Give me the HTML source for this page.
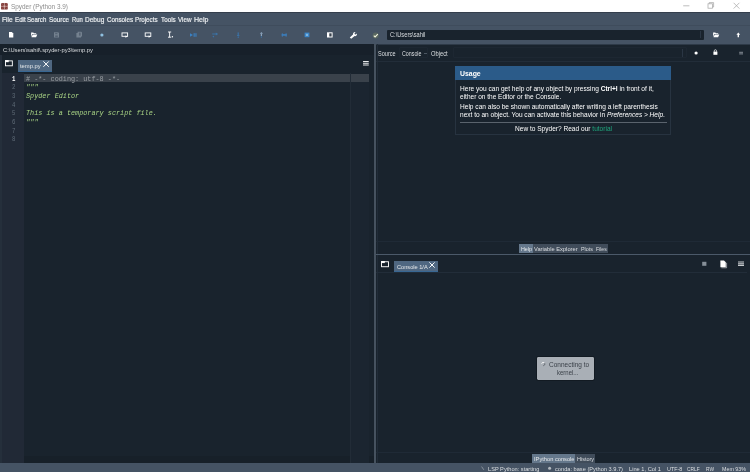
<!DOCTYPE html>
<html><head><meta charset="utf-8"><title>Spyder (Python 3.9)</title>
<style>
*{box-sizing:border-box;margin:0;padding:0}
html,body{width:750px;height:472px;overflow:hidden;background:#19232D}
body{position:relative;font-family:"Liberation Sans",sans-serif;color:#E0E1E3}
.a{position:absolute}
.t{position:absolute;white-space:nowrap;transform-origin:0 50%;display:block}
svg{position:absolute;overflow:visible}
.t,svg{filter:blur(0.35px)}

</style></head><body>
<!-- title bar -->
<div class="a" style="left:0;top:0;width:750px;height:12px;background:#fff"></div>
<svg style="left:1.3px;top:2.6px" width="6.8" height="6.6" viewBox="0 0 68 66"><rect x="0" y="0" width="68" height="66" rx="12" fill="#7c3531"/><path d="M34 0V66M0 33H68" stroke="#f3dcda" stroke-width="7" fill="none" opacity=".8"/><path d="M10 10L58 56M58 10L10 56" stroke="#f3dcda" stroke-width="4" fill="none" opacity=".45"/><rect x="3" y="3" width="62" height="60" rx="10" fill="none" stroke="#c99" stroke-width="4" opacity=".5"/></svg>
<svg style="left:680px;top:1px" width="64" height="10" viewBox="680 1 64 10"><g stroke="#a8a8a8" stroke-width=".75" fill="none"><path d="M683.2 5.8H689.4"/><rect x="708" y="3.8" width="4.4" height="4.4"/><path d="M709.2 3.8V2.6H713.6V7H712.4"/><path d="M733.6 2.8L739.4 8.6M739.4 2.8L733.6 8.6"/></g></svg>
<!-- menu + toolbar -->
<div class="a" style="left:0;top:12px;width:750px;height:32.6px;background:#455364"></div>
<div class="a" style="left:0;top:24.6px;width:750px;height:1px;background:#3f4c5c"></div>
<div class="a" style="left:0;top:44.2px;width:750px;height:.8px;background:#2e3a48"></div>
<div class="a" style="left:0;top:12px;width:750px;height:.7px;background:#353f4d"></div>
<!-- toolbar icons -->
<svg style="left:0;top:24px" width="750" height="20" viewBox="0 24 750 20">
 <g fill="#fff">
  <path d="M9 32.1h2.8l1.5 1.5v3.9H9z"/>
  <path d="M31.1 32.6h2.2l.6.7h2.3v.8h-3.9l-1.2 3zM32.7 34.6h4.6l-1.2 2.6h-4.6z"/>
 </g>
 <g fill="#74818f">
  <path d="M54 32.2h4.2l.8.8v4.4H54z"/><rect x="55.2" y="32.9" width="2.2" height="1.3" fill="#556373"/><rect x="55.2" y="35.4" width="2.6" height="1.6" fill="#556373"/>
  <path d="M77.6 31.8h3.6l.8.8v3.8h-1v1.2h-4.6v-4.6h1.2z"/><rect x="79" y="32.6" width="1.6" height="3" fill="#556373"/>
 </g>
 <circle cx="101.9" cy="35" r="1.6" fill="#8fc0e0"/>
 <g fill="none" stroke="#fff" stroke-width=".9">
  <rect x="122" y="32.9" width="5.6" height="3.4"/>
  <rect x="145.2" y="32.9" width="5.6" height="3.4"/>
 </g>
 <path d="M125.4 35.6l2.4.9-2.4 1.2zM148.6 35.6l2.4.9-2.4 1.2z" fill="#fff"/>
 <path d="M168 32h3.2M169.6 32v5.2M168 37.2h3.2" stroke="#fff" stroke-width=".9" fill="none"/>
 <circle cx="172.4" cy="36.8" r=".7" fill="#fff"/>
 <g fill="#3b82c4">
  <path d="M190 33.2l3 1.8-3 1.8z"/><rect x="193.6" y="33.2" width="1.1" height="3.6"/><rect x="195.4" y="33.2" width="1.1" height="3.6"/>
 </g>
 <g fill="#3a78b2" opacity=".85">
  <path d="M212.2 33.4h4.4v1.1h-4.4zM215.8 32.6l2.4 1.5-2.4 1.5z"/><circle cx="213.4" cy="36.6" r=".8"/>
  <rect x="237.6" y="32.4" width="1.2" height="3.2"/><path d="M236.6 35l1.6 1.8 1.6-1.8z"/><circle cx="238.2" cy="37.4" r=".6"/>
  <circle cx="261.4" cy="37" r=".7"/>
 </g>
 <g fill="#8da5bd"><rect x="260.8" y="33.4" width="1.2" height="2.6"/><path d="M259.8 33.8l1.6-1.8 1.6 1.8z"/></g>
 <g fill="#3b82c4"><rect x="281.6" y="34.2" width="5.2" height="1.5"/><rect x="281.8" y="33" width="1" height="4" opacity=".6"/><rect x="285.6" y="33" width="1" height="4" opacity=".6"/></g>
 <rect x="304.6" y="32.6" width="4.8" height="4.6" fill="#3b86c8"/><rect x="305.9" y="33.8" width="2.2" height="2.2" fill="#7fb4de"/>
 <rect x="327" y="32.3" width="5.6" height="5.2" fill="#fff"/><rect x="329.3" y="33.3" width="2.3" height="3.2" fill="#39434f"/>
 <path d="M349.8 37.6l3.2-3.2a2 2 0 0 1 2.6-2.2l-1.1 1.1.3 1 1 .3 1.1-1.1a2 2 0 0 1-2.3 2.6l-3.4 2.6z" fill="#fff"/>
 <circle cx="375.6" cy="35.4" r="3" fill="#6d7c5c" opacity=".5"/><path d="M373.8 35.6l1.3 1.3 2.7-2.7" stroke="#f4f6e0" stroke-width="1.1" fill="none"/>
 <g fill="#fff">
  <path d="M713.1 32.6h2.2l.6.7h2.3v.8h-3.9l-1.2 3zM714.7 34.6h4.6l-1.2 2.6h-4.6z"/>
  <path d="M738.3 32.6l1.9 2.2h-1.2v2.4h-1.4v-2.4h-1.2z"/>
 </g>
</svg>
<!-- cwd combobox -->
<div class="a" style="left:387px;top:29.6px;width:317.4px;height:10.2px;background:#19232D;border-radius:1px"></div>
<div class="a" style="left:700.2px;top:31px;width:1px;height:7.4px;background:#2a3644"></div>
<!-- panes background -->
<div class="a" style="left:0;top:44.4px;width:374px;height:10.4px;background:#17202a"></div>
<!-- line number area -->
<div class="a" style="left:0;top:73px;width:24.4px;height:390px;background:#212936"></div>
<div class="a" style="left:0;top:55px;width:1.6px;height:408px;background:#252f3b"></div>
<div class="a" style="left:24.4px;top:456.4px;width:349.6px;height:6.8px;background:#172029"></div>
<!-- current line -->
<div class="a" style="left:24.4px;top:73.8px;width:344.6px;height:8.2px;background:#3a424b"></div>
<!-- edge line -->
<div class="a" style="left:349.5px;top:73px;width:1px;height:390px;background:#222c37"></div>
<div class="a" style="left:350.5px;top:82px;width:18.5px;height:381px;background:#1b2530"></div>
<!-- editor tab bar -->
<svg style="left:5px;top:60px" width="7.8" height="6.4" viewBox="0 0 84 66"><rect x="5" y="8" width="74" height="53" fill="none" stroke="#fff" stroke-width="10"/><path d="M0 0h40v22H0z" fill="#fff"/></svg>
<div class="a" style="left:17.8px;top:60.4px;width:34.2px;height:11.8px;background:#4f6781;border-bottom:1.6px solid #386793"></div>
<svg style="left:43.4px;top:61.4px" width="6.2" height="6.2" viewBox="0 0 62 62"><path d="M4 4L58 58M58 4L4 58" stroke="#fff" stroke-width="10" fill="none"/></svg>
<svg style="left:362.8px;top:60.9px" width="5.8" height="4.6" viewBox="0 0 62 50"><path d="M0 6H62M0 25H62M0 44H62" stroke="#e8eaec" stroke-width="11" fill="none"/></svg>
<!-- vertical splitter -->
<div class="a" style="left:374.3px;top:44.4px;width:1.8px;height:419px;background:#46525f"></div>
<!-- help pane toolbar -->
<div class="a" style="left:376.6px;top:44.4px;width:.8px;height:419px;background:#212c38"></div>
<div class="a" style="left:376px;top:61px;width:374px;height:1px;background:#222d39"></div>
<div class="a" style="left:398.6px;top:47.4px;width:29.6px;height:10.6px;border:1px solid #1d2732;border-radius:1px"></div>
<div class="a" style="left:424px;top:53px;width:2.6px;height:1px;background:#4b5662"></div>
<div class="a" style="left:452.6px;top:47.4px;width:234px;height:10.6px;border:1px solid #1d2732;border-radius:1px"></div>
<div class="a" style="left:682px;top:48.6px;width:1px;height:8px;background:#2a3644"></div>
<svg style="left:690px;top:46px" width="58" height="12" viewBox="690 46 58 12">
 <circle cx="696.1" cy="53" r="1.6" fill="#fff"/>
 <rect x="713.4" y="51.6" width="4" height="3.2" fill="#fff"/><path d="M714.3 51.8v-1a1.1 1.1 0 0 1 2.2 0v1" stroke="#fff" stroke-width=".7" fill="none"/>
 <path d="M739.2 52.3h3.8M739.2 53.9h3.8" stroke="#8e979f" stroke-width=".9"/>
</svg>
<!-- usage box -->
<div class="a" style="left:455.2px;top:66px;width:216px;height:69px;border:1px solid #273340;background:#19232D"></div>
<div class="a" style="left:455.2px;top:66px;width:216px;height:14px;background:#2b5b89"></div>
<div class="a" style="left:459.8px;top:121.5px;width:207px;height:1px;background:#5a636d"></div>
<!-- help bottom tabs -->
<div class="a" style="left:376px;top:241px;width:374px;height:1px;background:#1f2a36"></div>
<div class="a" style="left:519.2px;top:244.2px;width:88.4px;height:8.4px;background:#404c5a"></div>
<div class="a" style="left:519.2px;top:244.2px;width:13.6px;height:8.4px;background:#64778b"></div>
<!-- horizontal splitter -->
<div class="a" style="left:376px;top:254px;width:374px;height:1.4px;background:#4b5969"></div>
<!-- console pane -->
<svg style="left:381.2px;top:261px" width="8" height="6.2" viewBox="0 0 84 66"><rect x="5" y="8" width="74" height="53" fill="none" stroke="#fff" stroke-width="10"/><path d="M0 0h40v22H0z" fill="#fff"/></svg>
<div class="a" style="left:394px;top:261px;width:44.2px;height:11.4px;background:#4f6781;border-bottom:1.6px solid #386793"></div>
<svg style="left:429.4px;top:262px" width="6" height="6" viewBox="0 0 62 62"><path d="M4 4L58 58M58 4L4 58" stroke="#fff" stroke-width="10" fill="none"/></svg>
<div class="a" style="left:376px;top:272px;width:371px;height:1px;background:#222d39"></div>
<svg style="left:700px;top:258px" width="48" height="12" viewBox="700 258 48 12">
 <rect x="702.2" y="261.8" width="4.2" height="4" fill="#868f98"/>
 <path d="M720.4 260.4h3.6l1.8 1.8v5h-5.4z" fill="#fff"/><path d="M721.4 267.8h5.2v-5" stroke="#c9ccd0" stroke-width=".7" fill="none"/>
 <path d="M738 262h6M738 263.7h6M738 265.4h6" stroke="#c6cacd" stroke-width="1.1"/>
</svg>
<!-- connecting box -->
<div class="a" style="left:537.2px;top:357.4px;width:56.6px;height:22.8px;background:#a9afb6;border-radius:1.4px;box-shadow:0 0 0 .9px #121a22"></div>
<svg style="left:541px;top:362.2px" width="4.2" height="4.2" viewBox="0 0 42 42"><path d="M6 16A17 17 0 0 1 36 12" stroke="#fff" stroke-width="9" fill="none"/><path d="M36 12A17 17 0 0 1 24 37" stroke="#4a5058" stroke-width="8" fill="none"/></svg>
<!-- console bottom tabs -->
<div class="a" style="left:376px;top:452.4px;width:374px;height:1px;background:#1f2a36"></div>
<div class="a" style="left:532px;top:454.2px;width:63.4px;height:8.6px;background:#404c5a"></div>
<div class="a" style="left:532px;top:454.2px;width:43.4px;height:8.6px;background:#64778b"></div>
<!-- status bar -->
<div class="a" style="left:0;top:463.2px;width:750px;height:9px;background:#455364"></div>
<svg style="left:480px;top:464px" width="80" height="8" viewBox="480 464 80 8">
 <path d="M481.6 466.6l2.2 3.2" stroke="#8f99a3" stroke-width=".9" fill="none"/>
 <circle cx="549.6" cy="468.2" r="1.5" fill="#b4bac0"/>
</svg>

<span class="t" id="t0" style='left:11.00px;top:1.60px;font-size:7.8px;line-height:10px;color:#8c8c8c;font-family:"Liberation Sans",sans-serif;transform:scaleX(0.8220);'>Spyder (Python 3.9)</span>
<span class="t" id="t1" style='left:2.00px;top:15.20px;font-size:8.0px;line-height:10px;color:#eef0f2;font-family:"Liberation Sans",sans-serif;-webkit-text-stroke:.2px #eef0f2;transform:scaleX(0.8301);'>File</span>
<span class="t" id="t2" style='left:14.70px;top:15.20px;font-size:8.0px;line-height:10px;color:#eef0f2;font-family:"Liberation Sans",sans-serif;-webkit-text-stroke:.2px #eef0f2;transform:scaleX(0.7755);'>Edit</span>
<span class="t" id="t3" style='left:27.40px;top:15.20px;font-size:8.0px;line-height:10px;color:#eef0f2;font-family:"Liberation Sans",sans-serif;-webkit-text-stroke:.2px #eef0f2;transform:scaleX(0.7611);'>Search</span>
<span class="t" id="t4" style='left:48.70px;top:15.20px;font-size:8.0px;line-height:10px;color:#eef0f2;font-family:"Liberation Sans",sans-serif;-webkit-text-stroke:.2px #eef0f2;transform:scaleX(0.7926);'>Source</span>
<span class="t" id="t5" style='left:72.00px;top:15.20px;font-size:8.0px;line-height:10px;color:#eef0f2;font-family:"Liberation Sans",sans-serif;-webkit-text-stroke:.2px #eef0f2;transform:scaleX(0.7353);'>Run</span>
<span class="t" id="t6" style='left:85.40px;top:15.20px;font-size:8.0px;line-height:10px;color:#eef0f2;font-family:"Liberation Sans",sans-serif;-webkit-text-stroke:.2px #eef0f2;transform:scaleX(0.8186);'>Debug</span>
<span class="t" id="t7" style='left:106.70px;top:15.20px;font-size:8.0px;line-height:10px;color:#eef0f2;font-family:"Liberation Sans",sans-serif;-webkit-text-stroke:.2px #eef0f2;transform:scaleX(0.7794);'>Consoles</span>
<span class="t" id="t8" style='left:135.40px;top:15.20px;font-size:8.0px;line-height:10px;color:#eef0f2;font-family:"Liberation Sans",sans-serif;-webkit-text-stroke:.2px #eef0f2;transform:scaleX(0.7818);'>Projects</span>
<span class="t" id="t9" style='left:160.70px;top:15.20px;font-size:8.0px;line-height:10px;color:#eef0f2;font-family:"Liberation Sans",sans-serif;-webkit-text-stroke:.2px #eef0f2;transform:scaleX(0.7866);'>Tools</span>
<span class="t" id="t10" style='left:178.00px;top:15.20px;font-size:8.0px;line-height:10px;color:#eef0f2;font-family:"Liberation Sans",sans-serif;-webkit-text-stroke:.2px #eef0f2;transform:scaleX(0.7847);'>View</span>
<span class="t" id="t11" style='left:193.50px;top:15.20px;font-size:8.0px;line-height:10px;color:#eef0f2;font-family:"Liberation Sans",sans-serif;-webkit-text-stroke:.2px #eef0f2;transform:scaleX(0.8813);'>Help</span>
<span class="t" id="t12" style='left:2.90px;top:45.10px;font-size:6.2px;line-height:10px;color:#dcdfe2;font-family:"Liberation Sans",sans-serif;transform:scaleX(0.9336);'>C:\Users\sahil\.spyder-py3\temp.py</span>
<span class="t" id="t13" style='left:20.00px;top:61.20px;font-size:6.0px;line-height:10px;color:#e6e8ea;font-family:"Liberation Sans",sans-serif;transform:scaleX(0.9698);'>temp.py</span>
<span class="t" id="t14" style='left:389.80px;top:29.70px;font-size:6.5px;line-height:10px;color:#dcdfe2;font-family:"Liberation Sans",sans-serif;transform:scaleX(0.8747);'>C:\Users\sahil</span>
<span class="t" id="t15" style='left:378.40px;top:49.20px;font-size:6.5px;line-height:10px;color:#dcdfe2;font-family:"Liberation Sans",sans-serif;transform:scaleX(0.8540);'>Source</span>
<span class="t" id="t16" style='left:401.60px;top:49.20px;font-size:6.5px;line-height:10px;color:#dcdfe2;font-family:"Liberation Sans",sans-serif;transform:scaleX(0.8173);'>Console</span>
<span class="t" id="t17" style='left:430.70px;top:49.20px;font-size:6.5px;line-height:10px;color:#dcdfe2;font-family:"Liberation Sans",sans-serif;transform:scaleX(0.8884);'>Object</span>
<span class="t" id="t18" style='left:459.80px;top:68.60px;font-size:6.9px;line-height:10px;color:#ffffff;font-family:"Liberation Sans",sans-serif;font-weight:bold;transform:scaleX(1.0006);'>Usage</span>
<span class="t" id="t19" style='left:459.80px;top:83.80px;font-size:6.5px;line-height:10px;color:#ffffff;font-family:"Liberation Sans",sans-serif;transform:scaleX(1.0109);'>Here you can get help of any object by pressing <b>Ctrl+I</b> in front of it,</span>
<span class="t" id="t20" style='left:459.80px;top:91.60px;font-size:6.5px;line-height:10px;color:#ffffff;font-family:"Liberation Sans",sans-serif;transform:scaleX(1.0038);'>either on the Editor or the Console.</span>
<span class="t" id="t21" style='left:459.80px;top:102.20px;font-size:6.5px;line-height:10px;color:#ffffff;font-family:"Liberation Sans",sans-serif;transform:scaleX(1.0114);'>Help can also be shown automatically after writing a left parenthesis</span>
<span class="t" id="t22" style='left:459.80px;top:110.10px;font-size:6.5px;line-height:10px;color:#ffffff;font-family:"Liberation Sans",sans-serif;transform:scaleX(1.0062);'>next to an object. You can activate this behavior in <i>Preferences &gt; Help</i>.</span>
<span class="t" id="t23" style='left:514.70px;top:124.20px;font-size:6.5px;line-height:10px;color:#ffffff;font-family:"Liberation Sans",sans-serif;transform:scaleX(1.0091);'>New to Spyder? Read our <span style="color:#1fa67d">tutorial</span></span>
<span class="t" id="t24" style='left:520.50px;top:244.30px;font-size:6.1px;line-height:10px;color:#e6e8ea;font-family:"Liberation Sans",sans-serif;transform:scaleX(0.8767);'>Help</span>
<span class="t" id="t25" style='left:534.40px;top:244.30px;font-size:6.1px;line-height:10px;color:#dcdfe2;font-family:"Liberation Sans",sans-serif;transform:scaleX(0.9417);'>Variable Explorer</span>
<span class="t" id="t26" style='left:580.80px;top:244.30px;font-size:6.1px;line-height:10px;color:#dcdfe2;font-family:"Liberation Sans",sans-serif;transform:scaleX(0.8848);'>Plots</span>
<span class="t" id="t27" style='left:595.70px;top:244.30px;font-size:6.1px;line-height:10px;color:#dcdfe2;font-family:"Liberation Sans",sans-serif;transform:scaleX(0.8311);'>Files</span>
<span class="t" id="t28" style='left:396.70px;top:261.60px;font-size:6.0px;line-height:10px;color:#e6e8ea;font-family:"Liberation Sans",sans-serif;transform:scaleX(0.9392);'>Console 1/A</span>
<span class="t" id="t29" style='left:548.70px;top:360.00px;font-size:6.6px;line-height:10px;color:#3b4149;font-family:"Liberation Sans",sans-serif;transform:scaleX(0.9852);'>Connecting to</span>
<span class="t" id="t30" style='left:556.70px;top:367.70px;font-size:6.6px;line-height:10px;color:#3b4149;font-family:"Liberation Sans",sans-serif;transform:scaleX(0.9076);'>kernel...</span>
<span class="t" id="t31" style='left:533.50px;top:454.30px;font-size:6.1px;line-height:10px;color:#e6e8ea;font-family:"Liberation Sans",sans-serif;transform:scaleX(0.9337);'>IPython console</span>
<span class="t" id="t32" style='left:577.00px;top:454.30px;font-size:6.1px;line-height:10px;color:#dcdfe2;font-family:"Liberation Sans",sans-serif;transform:scaleX(0.8962);'>History</span>
<span class="t" id="t33" style='left:488.00px;top:463.80px;font-size:6.2px;line-height:10px;color:#dcdfe2;font-family:"Liberation Sans",sans-serif;transform:scaleX(0.9112);'>LSP Python: starting</span>
<span class="t" id="t34" style='left:555.30px;top:463.80px;font-size:6.2px;line-height:10px;color:#dcdfe2;font-family:"Liberation Sans",sans-serif;transform:scaleX(0.9151);'>conda: base (Python 3.9.7)</span>
<span class="t" id="t35" style='left:628.70px;top:463.80px;font-size:6.2px;line-height:10px;color:#dcdfe2;font-family:"Liberation Sans",sans-serif;transform:scaleX(0.9209);'>Line 1, Col 1</span>
<span class="t" id="t36" style='left:666.70px;top:463.80px;font-size:6.2px;line-height:10px;color:#dcdfe2;font-family:"Liberation Sans",sans-serif;transform:scaleX(0.8727);'>UTF-8</span>
<span class="t" id="t37" style='left:687.30px;top:463.80px;font-size:6.2px;line-height:10px;color:#dcdfe2;font-family:"Liberation Sans",sans-serif;transform:scaleX(0.7853);'>CRLF</span>
<span class="t" id="t38" style='left:706.00px;top:463.80px;font-size:6.2px;line-height:10px;color:#dcdfe2;font-family:"Liberation Sans",sans-serif;transform:scaleX(0.7841);'>RW</span>
<span class="t" id="t39" style='left:722.00px;top:463.80px;font-size:6.2px;line-height:10px;color:#dcdfe2;font-family:"Liberation Sans",sans-serif;transform:scaleX(0.8615);'>Mem 93%</span>
<span class="t" id="t40" style='left:25.80px;top:73.70px;font-size:6.8px;line-height:10px;color:#9a9fa4;font-family:"Liberation Mono",monospace;transform:scaleX(1.0027);'># -*- coding: utf-8 -*-</span>
<span class="t" id="t41" style='left:12.20px;top:74.50px;font-size:6.6px;line-height:10px;color:#ffffff;font-family:"Liberation Mono",monospace;font-weight:bold;transform:scaleX(0.8567);'>1</span>
<span class="t" id="t42" style='left:25.80px;top:82.38px;font-size:6.8px;line-height:10px;color:#a9d485;font-family:"Liberation Mono",monospace;font-style:italic;transform:scaleX(1.0016);'>&quot;&quot;&quot;</span>
<span class="t" id="t43" style='left:12.40px;top:83.18px;font-size:6.4px;line-height:10px;color:#5f6b77;font-family:"Liberation Mono",monospace;transform:scaleX(0.8846);'>2</span>
<span class="t" id="t44" style='left:25.80px;top:91.06px;font-size:6.8px;line-height:10px;color:#a9d485;font-family:"Liberation Mono",monospace;font-style:italic;transform:scaleX(1.0026);'>Spyder Editor</span>
<span class="t" id="t45" style='left:12.40px;top:91.86px;font-size:6.4px;line-height:10px;color:#5f6b77;font-family:"Liberation Mono",monospace;transform:scaleX(0.8846);'>3</span>
<span class="t" id="t46" style='left:12.40px;top:100.54px;font-size:6.4px;line-height:10px;color:#5f6b77;font-family:"Liberation Mono",monospace;transform:scaleX(0.8846);'>4</span>
<span class="t" id="t47" style='left:25.80px;top:108.42px;font-size:6.8px;line-height:10px;color:#a9d485;font-family:"Liberation Mono",monospace;font-style:italic;transform:scaleX(1.0027);'>This is a temporary script file.</span>
<span class="t" id="t48" style='left:12.40px;top:109.22px;font-size:6.4px;line-height:10px;color:#5f6b77;font-family:"Liberation Mono",monospace;transform:scaleX(0.8846);'>5</span>
<span class="t" id="t49" style='left:25.80px;top:117.10px;font-size:6.8px;line-height:10px;color:#a9d485;font-family:"Liberation Mono",monospace;font-style:italic;transform:scaleX(1.0016);'>&quot;&quot;&quot;</span>
<span class="t" id="t50" style='left:12.40px;top:117.90px;font-size:6.4px;line-height:10px;color:#5f6b77;font-family:"Liberation Mono",monospace;transform:scaleX(0.8846);'>6</span>
<span class="t" id="t51" style='left:12.40px;top:126.58px;font-size:6.4px;line-height:10px;color:#5f6b77;font-family:"Liberation Mono",monospace;transform:scaleX(0.8846);'>7</span>
<span class="t" id="t52" style='left:12.40px;top:135.26px;font-size:6.4px;line-height:10px;color:#5f6b77;font-family:"Liberation Mono",monospace;transform:scaleX(0.8846);'>8</span>
</body></html>
